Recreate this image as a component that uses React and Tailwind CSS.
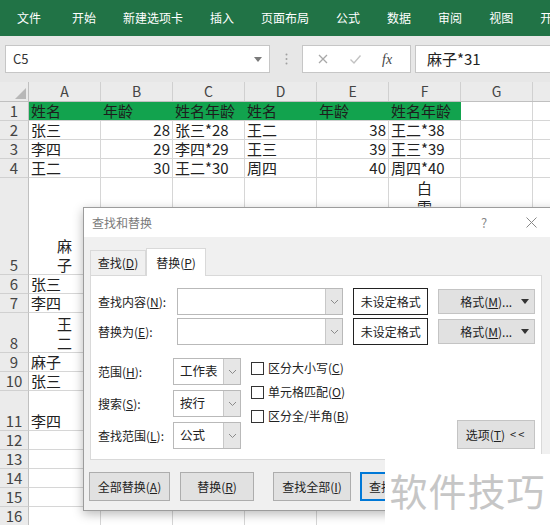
import React from "react";

const tabs = ["文件", "开始", "新建选项卡", "插入", "页面布局", "公式", "数据", "审阅", "视图", "开"];
const cols = ["A", "B", "C", "D", "E", "F", "G", "H"];

// cell: [text, align, vertical]
const rows = [
  { n: 1, h: 19, green: true, cells: { A: ["姓名"], B: ["年龄"], C: ["姓名年龄"], D: ["姓名"], E: ["年龄"], F: ["姓名年龄"] } },
  { n: 2, h: 19, cells: { A: ["张三"], B: ["28", "r"], C: ["张三*28"], D: ["王二"], E: ["38", "r"], F: ["王二*38"] } },
  { n: 3, h: 19, cells: { A: ["李四"], B: ["29", "r"], C: ["李四*29"], D: ["王三"], E: ["39", "r"], F: ["王三*39"] } },
  { n: 4, h: 19, cells: { A: ["王二"], B: ["30", "r"], C: ["王二*30"], D: ["周四"], E: ["40", "r"], F: ["周四*40"] } },
  { n: 5, h: 97, cells: { A: ["麻\n子", "c"], F: ["白\n雪\n公\n主", "c", "top"] } },
  { n: 6, h: 19, cells: { A: ["张三"] } },
  { n: 7, h: 19, cells: { A: ["李四"] } },
  { n: 8, h: 40, cells: { A: ["王\n二", "c"] } },
  { n: 9, h: 19, cells: { A: ["麻子"] } },
  { n: 10, h: 19, cells: { A: ["张三"] } },
  { n: 11, h: 40, cells: { A: ["李四"] } },
  { n: 12, h: 19, cells: {} },
  { n: 13, h: 19, cells: {} },
  { n: 14, h: 19, cells: {} },
  { n: 15, h: 19, cells: {} },
  { n: 16, h: 19, cells: {} },
];

const Chevron = () => (
  <svg width="9" height="6" viewBox="0 0 9 6">
    <polyline points="1,1 4.5,4.5 8,1" fill="none" stroke="#8a8a8a" strokeWidth="1" />
  </svg>
);

const Combo = ({ w, text }) => (
  <div className={`flex h-full bg-white border border-[#b9b9b9] ${w}`}>
    <div className="flex-1 flex items-center pl-[6px] text-[12.5px] text-[#222]">{text}</div>
    <div className="w-[17px] bg-[#e6e6e6] border-l border-[#c8c8c8] flex items-center justify-center">
      <Chevron />
    </div>
  </div>
);

const Check = ({ children }) => (
  <div className="flex items-center gap-[4px] text-[12px] text-[#222]">
    <div className="w-[13px] h-[13px] border border-[#333] bg-white" />
    <span>{children}</span>
  </div>
);

const Btn = ({ w, children, blue }) => (
  <div className={`h-[29px] flex items-center justify-center text-[12px] text-[#222] bg-[#e1e1e1] ${blue ? "border-2 border-[#0078d7]" : "border border-[#adadad]"} ${w}`}>
    {children}
  </div>
);

export default function App() {
  return (
    <div className="relative w-[550px] h-[525px] overflow-hidden bg-white font-['Noto_Sans_CJK_SC',sans-serif]">
      {/* ribbon */}
      <div className="h-[36px] bg-[#217346] flex items-center pl-[17px] gap-[27px] text-[12px] text-white whitespace-nowrap">
        {tabs.map((t, i) => (
          <span key={t} className={i === 0 ? "mr-[4px]" : ""}>{t}</span>
        ))}
      </div>

      {/* formula bar */}
      <div className="h-[46px] bg-[#e7e7e7] flex items-center pl-[5px]">
        <div className="w-[265px] h-[28px] bg-white border border-[#c6c6c6] flex items-center justify-between px-[7px]">
          <span className="text-[13px] text-[#333]">C5</span>
          <svg width="8" height="5" viewBox="0 0 8 5"><polygon points="0,0 8,0 4,5" fill="#7a7a7a" /></svg>
        </div>
        <div className="w-[32px] flex justify-center">
          <svg width="3" height="12" viewBox="0 0 3 12">
            <circle cx="1.5" cy="1.5" r="1" fill="#a0a0a0" />
            <circle cx="1.5" cy="6" r="1" fill="#a0a0a0" />
            <circle cx="1.5" cy="10.5" r="1" fill="#a0a0a0" />
          </svg>
        </div>
        <div className="w-[109px] h-[28px] bg-white border border-[#c6c6c6] flex items-center pl-[14px] gap-[20px]">
          <svg width="12" height="12" viewBox="0 0 12 12"><path d="M2 2 L10 10 M10 2 L2 10" stroke="#a8a8a8" strokeWidth="1.3" /></svg>
          <svg width="13" height="12" viewBox="0 0 13 12"><path d="M1.5 6.5 L5 10 L11.5 2.5" fill="none" stroke="#c2c2c2" strokeWidth="1.4" /></svg>
          <span className="text-[14px] italic text-[#444] font-['Liberation_Serif',serif]">fx</span>
        </div>
        <div className="ml-[4px] flex-1 h-[28px] bg-white border border-[#c6c6c6] border-r-0 flex items-center pl-[11px] text-[15px] text-[#222]">
          麻子*31
        </div>
      </div>

      {/* sheet */}
      <div className="flex flex-col">
        <div className="flex h-[20px] bg-[#ebebeb] border-b border-[#c0c0c0]">
          <div className="w-[29px] shrink-0 border-r border-[#c0c0c0] relative">
            <svg className="absolute right-[2px] bottom-[2px]" width="11" height="11" viewBox="0 0 11 11"><polygon points="11,0 11,11 0,11" fill="#b8b8b8" /></svg>
          </div>
          {cols.map((c) => (
            <div key={c} className="w-[72px] shrink-0 border-r border-[#d0d0d0] flex items-center justify-center text-[14px] text-[#444]">
              {c}
            </div>
          ))}
        </div>
        {rows.map((r) => (
          <div key={r.n} className="flex" style={{ height: r.h }}>
            <div className="w-[29px] shrink-0 bg-[#ebebeb] border-r border-[#c0c0c0] border-b border-b-[#d0d0d0] flex items-end justify-center text-[15px] leading-[19px] text-[#444]">
              {r.n}
            </div>
            {cols.map((c) => {
              const cell = r.cells[c];
              const green = r.green && "ABCDEF".includes(c);
              const al = cell ? cell[1] : null;
              const top = cell && cell[2] === "top";
              return (
                <div
                  key={c}
                  className={`w-[72px] shrink-0 flex px-[2px] text-[15px] leading-[19px] whitespace-pre-line ${
                    green ? "bg-[#12a34e] text-[#1d1d1d] border-b border-[#d0d0d0]" : "text-[#222] border-r border-b border-[#d6d6d6]"
                  } ${top ? "items-start" : "items-end"} ${al === "r" ? "justify-end text-right" : al === "c" ? "justify-center text-center" : "justify-start"}`}
                >
                  {cell ? cell[0] : ""}
                </div>
              );
            })}
          </div>
        ))}
      </div>

      {/* find & replace dialog */}
      <div className="absolute left-[83px] top-[207px] w-[480px] h-[304px] bg-[#f0f0f0] border border-[#9c9c9c] shadow-[0_3px_10px_rgba(0,0,0,0.28)] flex flex-col">
        <div className="h-[29px] bg-white flex items-center pl-[8px] text-[12px] text-[#7a7a7a]">
          <span className="flex-1">查找和替换</span>
          <span className="w-[45px] text-[13px] text-[#888]">?</span>
          <svg className="mr-[25px]" width="11" height="11" viewBox="0 0 11 11"><path d="M0.5 0.5 L10.5 10.5 M10.5 0.5 L0.5 10.5" stroke="#888" strokeWidth="1" /></svg>
        </div>
        <div className="mt-[10px] ml-[6px] flex items-end h-[28px]">
          <div className="w-[56px] h-[25px] border border-b-0 border-[#d9d9d9] bg-[#f0f0f0] flex items-center justify-center text-[12px] text-[#222]">
            查找(<u>D</u>)
          </div>
          <div className="w-[60px] h-[28px] border border-b-0 border-[#d9d9d9] bg-white flex items-center justify-center text-[12px] text-[#222] relative top-[1px]">
            替换(<u>P</u>)
          </div>
        </div>
        <div className="ml-[6px] w-[452px] h-[185px] bg-white border border-[#d9d9d9] flex flex-col pt-[12px] pl-[7px] pr-[6px] pb-[11px]">
          <div className="flex flex-col gap-[3px]">
            {[
              ["查找内容(", "N", "):"],
              ["替换为(", "E", "):"],
            ].map(([a, u, b]) => (
              <div key={u} className="flex items-center h-[27px]">
                <span className="w-[79px] text-[12px] text-[#222]">
                  {a}<u>{u}</u>{b}
                </span>
                <Combo w="w-[167px]" text="" />
                <div className="ml-[10px] w-[75px] h-full border border-[#222] bg-white flex items-center justify-center text-[12px] text-[#222]">
                  未设定格式
                </div>
                <div className="ml-[10px] w-[97px] h-[25px] bg-[#e1e1e1] border border-[#c4c4c4] flex items-center pl-[21px] text-[12px] text-[#222]">
                  <span className="flex-1">格式(<u>M</u>)...</span>
                  <svg className="mr-[5px]" width="8" height="5" viewBox="0 0 8 5"><polygon points="0,0 8,0 4,5" fill="#333" /></svg>
                </div>
              </div>
            ))}
          </div>
          <div className="mt-[13px] flex flex-1">
            <div className="flex flex-col gap-[5px]">
              {[
                ["范围(", "H", "):", "工作表"],
                ["搜索(", "S", "):", "按行"],
                ["查找范围(", "L", "):", "公式"],
              ].map(([a, u, b, v]) => (
                <div key={u} className="flex items-center h-[27px]">
                  <span className="w-[75px] text-[12px] text-[#222]">
                    {a}<u>{u}</u>{b}
                  </span>
                  <Combo w="w-[68px]" text={v} />
                </div>
              ))}
            </div>
            <div className="ml-[10px] pt-[1px] flex flex-col gap-[6px]">
              <Check>区分大小写(<u>C</u>)</Check>
              <Check>单元格匹配(<u>O</u>)</Check>
              <Check>区分全/半角(<u>B</u>)</Check>
            </div>
            <div className="flex-1 flex items-end justify-end">
              <div className="w-[78px] h-[29px] bg-[#e1e1e1] border border-[#c4c4c4] flex items-center justify-center text-[12px] text-[#222] gap-[5px]">
                <span>选项(<u>T</u>)</span>
                <span className="text-[11px] tracking-[2px]">&lt;&lt;</span>
              </div>
            </div>
          </div>
        </div>
        <div className="mt-[12px] ml-[5px] flex">
          <Btn w="w-[81px]">全部替换(<u>A</u>)</Btn>
          <Btn w="w-[74px] ml-[10px]">替换(<u>R</u>)</Btn>
          <Btn w="w-[78px] ml-[19px]">查找全部(<u>I</u>)</Btn>
          <Btn w="w-[90px] ml-[9px] justify-start pl-[7px]" blue>查找下一个(<u>F</u>)</Btn>
        </div>
      </div>

      {/* watermark */}
      <div className="absolute left-[385px] top-[454px] w-[165px] h-[71px] bg-white flex items-center justify-center text-[38px] text-[#c6c6c6] tracking-[1px]">
        软件技巧
      </div>
    </div>
  );
}
